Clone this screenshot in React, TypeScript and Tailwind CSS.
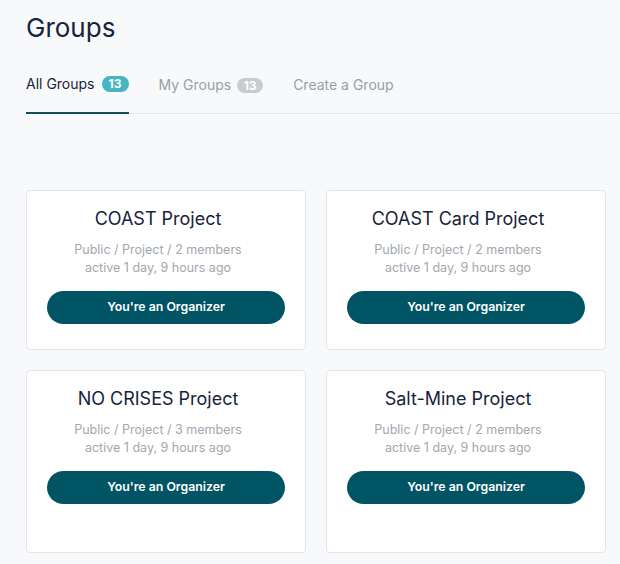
import React from "react";

const groups = [
  { name: "COAST Project", members: 2 },
  { name: "COAST Card Project", members: 2 },
  { name: "NO CRISES Project", members: 3 },
  { name: "Salt-Mine Project", members: 2 },
];

function Card({ name, members, tall }: { name: string; members: number; tall?: boolean }) {
  return (
    <div
      className={`bg-white border border-[#e3e5ea] rounded-[4px] flex flex-col items-center px-[20px] pt-[16px] ${
        tall ? "h-[183px]" : "h-[160px]"
      }`}
    >
      <div className="w-full pr-[16px] text-center text-[18px] leading-[24px] text-[#17233b]">{name}</div>
      <div className="w-full pr-[16px] mt-[10px] text-[12.5px] leading-[18px] text-[#a3a7ae] text-center">
        <div>Public / Project / {members} members</div>
        <div>active 1 day, 9 hours ago</div>
      </div>
      <button className="mt-[14px] w-[238px] h-[33px] rounded-full bg-[#005464] text-white text-[12.3px] font-semibold">
        You're an Organizer
      </button>
    </div>
  );
}

export default function App() {
  return (
    <div
      className="min-h-[564px] w-[620px] bg-[#f8f9fb] overflow-hidden"
      style={{ fontFamily: "Inter, 'Noto Sans', sans-serif" }}
    >
      <div className="pl-[26px] pt-[12px]">
        <h1 className="text-[26px] leading-[32px] text-[#17233b] font-normal">Groups</h1>
        <div className="mt-[26px] flex items-start border-b border-[#e4e6ea]">
          <div className="flex items-center gap-[7px] h-[44px] pb-[15px] pt-[1px] border-b-2 border-[#0f4f5c] -mb-px text-[14px] text-[#17233b]">
            <span className="leading-[28px]">All Groups</span>
            <span className="bg-[#46b4c3] text-white text-[12px] font-bold rounded-full w-[27px] text-center h-[16px] leading-[16px]">13</span>
          </div>
          <div className="ml-[30px] flex items-center gap-[6px] h-[43px] pb-[14px] pt-[1px] text-[14px] text-[#9a9ea5]">
            <span className="leading-[28px]">My Groups</span>
            <span className="bg-[#c9cbd0] text-white text-[12px] font-bold rounded-full w-[26px] text-center h-[15px] leading-[15px]">13</span>
          </div>
          <div className="ml-[30px] flex items-center h-[43px] pb-[14px] pt-[1px] text-[14px] text-[#9a9ea5]">
            <span className="leading-[28px]">Create a Group</span>
          </div>
        </div>
        <div className="mt-[76px] grid grid-cols-[280px_280px] gap-[20px]">
          {groups.map((g, i) => (
            <Card key={g.name} name={g.name} members={g.members} tall={i >= 2} />
          ))}
        </div>
      </div>
    </div>
  );
}
